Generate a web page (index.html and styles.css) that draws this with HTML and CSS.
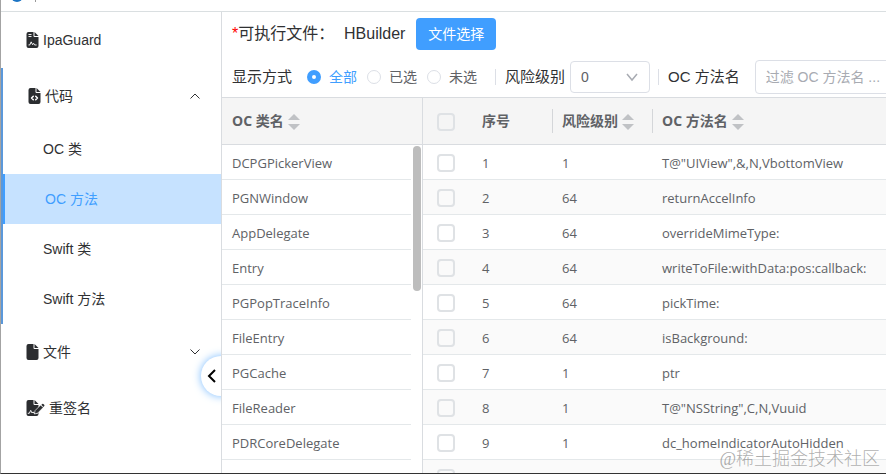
FILE: index.html
```html
<!DOCTYPE html>
<html lang="zh-CN">
<head>
<meta charset="utf-8">
<title>IpaGuard</title>
<link rel="stylesheet" href="styles.css">
</head>
<body>
<div class="window">
  <header class="titlebar"><span class="app-dot"></span><span class="app-tick"></span></header>
  <div class="layout">
    <nav class="sidebar">
      <a class="item" href="#guard">
        <svg class="icon" viewBox="0 0 384 512"><path fill="#2b2d30" d="M64 0h160v128q0 32 32 32h128v288q0 64-64 64H64q-64 0-64-64V64Q0 0 64 0z"/><path fill="#2b2d30" d="M256 0v128h128z"/><path fill="none" stroke="#fff" stroke-width="30" d="M64 80h96M64 145h96M64 415h40l45-100 45 90 35-42 30 52h65"/></svg>
        <span>IpaGuard</span>
      </a>
      <div class="group">
        <a class="item shifted" href="#code">
          <svg class="icon" viewBox="0 0 384 512"><path fill="#2b2d30" d="M64 0h160v128q0 32 32 32h128v288q0 64-64 64H64q-64 0-64-64V64Q0 0 64 0z"/><path fill="#2b2d30" d="M256 0v128h128z"/><path fill="none" stroke="#fff" stroke-width="48" stroke-linecap="round" stroke-linejoin="round" d="M153 265l-56 56 56 56M231 265l56 56-56 56"/></svg>
          <span>代码</span>
          <svg class="arrow" viewBox="0 0 12 12"><path d="M1.500 8.500L6 4l4.500 4.500"/></svg>
        </a>
        <a class="sub" href="#oc-class">OC 类</a>
        <a class="sub active" href="#oc-method">OC 方法</a>
        <a class="sub" href="#swift-class">Swift 类</a>
        <a class="sub" href="#swift-method">Swift 方法</a>
      </div>
      <a class="item" href="#files">
        <svg class="icon" viewBox="0 0 384 512"><path fill="#2b2d30" d="M64 0h160v128q0 32 32 32h128v288q0 64-64 64H64q-64 0-64-64V64Q0 0 64 0z"/><path fill="#2b2d30" d="M256 0v128h128z"/></svg>
        <span>文件</span>
        <svg class="arrow" viewBox="0 0 12 12"><path d="M1.500 3.500L6 8l4.500-4.500"/></svg>
      </a>
      <a class="item" href="#sign">
        <svg class="icon wide" viewBox="0 0 576 512"><path fill="#2b2d30" d="M64 0h160v128q0 32 32 32h128v288q0 64-64 64H64q-64 0-64-64V64Q0 0 64 0z"/><path fill="#2b2d30" d="M256 0v128h128z"/><path fill="none" stroke="#fff" stroke-width="30" d="M40 425h50l45-95 40 85 35-35 25 40h140"/><path fill="#2b2d30" stroke="#fff" stroke-width="22" d="M274 338l178-178 82 82-178 178-104 28z"/><path fill="#2b2d30" d="M476 155l28-26q22-18 44 4l18 18q20 22 2 44l-26 28z"/></svg>
        <span>重签名</span>
      </a>
      <button class="collapse" type="button" aria-label="收起"><svg viewBox="0 0 12 16"><path d="M9 2L3 8l6 6"/></svg></button>
    </nav>
    <main class="main">
      <div class="file-row">
        <span class="file-label"><span class="star">*</span>可执行文件：</span>
        <span class="file-name">HBuilder</span>
        <button class="primary" type="button">文件选择</button>
      </div>
      <form class="filters">
        <span class="caption">显示方式</span>
        <div class="radios">
          <label><input type="radio" name="mode" checked><span>全部</span></label>
          <label><input type="radio" name="mode"><span>已选</span></label>
          <label><input type="radio" name="mode"><span>未选</span></label>
        </div>
        <span class="rule wide-rule"></span>
        <label class="caption" for="risk">风险级别</label>
        <div class="select">
          <select id="risk"><option>0</option><option>1</option><option>64</option></select>
          <svg viewBox="0 0 14 14"><path d="M2 4l5 6 5-6"/></svg>
        </div>
        <span class="rule"></span>
        <label class="caption" for="method">OC 方法名</label>
        <input class="search" id="method" type="text" placeholder="过滤 OC 方法名 ...">
      </form>
      <div class="tables">
        <section class="classes">
          <table>
            <thead><tr><th><span class="head">OC 类名<span class="sort"></span></span></th></tr></thead>
            <tbody>
              <tr><td>DCPGPickerView</td></tr>
              <tr><td>PGNWindow</td></tr>
              <tr><td>AppDelegate</td></tr>
              <tr><td>Entry</td></tr>
              <tr><td>PGPopTraceInfo</td></tr>
              <tr><td>FileEntry</td></tr>
              <tr><td>PGCache</td></tr>
              <tr><td>FileReader</td></tr>
              <tr><td>PDRCoreDelegate</td></tr>
            </tbody>
          </table>
          <span class="thumb"></span>
        </section>
        <section class="methods">
          <table>
            <colgroup><col class="c-check"><col class="c-index"><col class="c-risk"><col></colgroup>
            <thead><tr>
              <th class="check"><input type="checkbox" aria-label="全选"></th>
              <th>序号</th>
              <th class="split"><span class="head">风险级别<span class="sort"></span></span></th>
              <th class="split"><span class="head">OC 方法名<span class="sort"></span></span></th>
            </tr></thead>
            <tbody>
              <tr><td class="check"><input type="checkbox" aria-label="1"></td><td>1</td><td>1</td><td>T@"UIView",&amp;,N,VbottomView</td></tr>
              <tr><td class="check"><input type="checkbox" aria-label="2"></td><td>2</td><td>64</td><td>returnAccelInfo</td></tr>
              <tr><td class="check"><input type="checkbox" aria-label="3"></td><td>3</td><td>64</td><td>overrideMimeType:</td></tr>
              <tr><td class="check"><input type="checkbox" aria-label="4"></td><td>4</td><td>64</td><td>writeToFile:withData:pos:callback:</td></tr>
              <tr><td class="check"><input type="checkbox" aria-label="5"></td><td>5</td><td>64</td><td>pickTime:</td></tr>
              <tr><td class="check"><input type="checkbox" aria-label="6"></td><td>6</td><td>64</td><td>isBackground:</td></tr>
              <tr><td class="check"><input type="checkbox" aria-label="7"></td><td>7</td><td>1</td><td>ptr</td></tr>
              <tr><td class="check"><input type="checkbox" aria-label="8"></td><td>8</td><td>1</td><td>T@"NSString",C,N,Vuuid</td></tr>
              <tr><td class="check"><input type="checkbox" aria-label="9"></td><td>9</td><td>1</td><td>dc_homeIndicatorAutoHidden</td></tr>
              <tr><td class="check"><input type="checkbox" aria-label="10"></td><td></td><td></td><td></td></tr>
            </tbody>
          </table>
        </section>
      </div>
    </main>
  </div>
  <span class="watermark">@稀土掘金技术社区</span>
</div>
</body>
</html>
```
FILE: styles.css
```css
* { box-sizing: border-box; }

body {
  margin: 0;
  background: #fff;
  color: #303133;
  font: 14px/20px "Liberation Sans", "Noto Sans CJK SC", sans-serif;
}

a { color: inherit; text-decoration: none; }
button, input, select { font: inherit; margin: 0; }

.window {
  position: relative;
  display: flex;
  flex-direction: column;
  height: 100vh;
  overflow: hidden;
  border-left: 1px solid #a3a3a3;
  border-bottom: 1px solid #333;
}

.titlebar {
  flex: none;
  display: flex;
  align-items: flex-end;
  gap: 12px;
  height: 12px;
  padding: 0 10px 9px;
  border-bottom: 1px solid #dadfe1;
}

.app-dot {
  width: 12px;
  height: 12px;
  border-radius: 50%;
  background: #1b74c4;
}

.app-tick { width: 1px; height: 12px; background: #999; }

.layout { flex: 1; display: flex; min-height: 0; }

.sidebar {
  position: relative;
  flex: none;
  width: 221px;
  overflow: hidden;
  border-right: 1px solid #d9dce0;
}

.item {
  display: flex;
  align-items: center;
  gap: 4px;
  height: 56px;
  padding: 0 20px 0 25px;
}

.group { border-left: 2px solid #5b98da; }

.icon { flex: none; width: 13px; height: 16px; }
.icon.wide { width: 19px; }

.arrow {
  width: 12px;
  height: 12px;
  margin-left: auto;
  fill: none;
  stroke: #303133;
}

.sub {
  display: flex;
  align-items: center;
  height: 50px;
  padding-left: 40px;
}

.sub.active {
  border-left: 2px solid #409eff;
  background: #c6e2ff;
  color: #409eff;
}

.collapse {
  position: absolute;
  top: 344px;
  right: -20px;
  width: 40px;
  height: 40px;
  padding: 0 0 0 5px;
  border: 0;
  border-radius: 50%;
  background: #fff;
  box-shadow: 0 0 8px #79bbff;
  text-align: left;
}

.collapse svg {
  display: block;
  width: 12px;
  height: 16px;
  fill: none;
  stroke: #000;
  stroke-width: 2;
}

.main { flex: 1; min-width: 0; display: flex; flex-direction: column; }

.file-row {
  flex: none;
  display: flex;
  align-items: center;
  height: 44px;
  padding-left: 10px;
  font-size: 16px;
}

.file-label { width: 112px; white-space: nowrap; }
.star { color: #f00; }

.primary {
  width: 80px;
  height: 32px;
  margin-left: 11px;
  padding: 0;
  border: 0;
  border-radius: 4px;
  background: #409eff;
  color: #fff;
  font-size: 14px;
}

.filters {
  flex: none;
  display: flex;
  align-items: center;
  height: 42px;
  padding-left: 10px;
  border-bottom: 1px solid #d9dce0;
}

.caption { flex: none; font-size: 15px; }

.radios { flex: none; display: flex; gap: 10px; margin-left: 15px; color: #606266; }
.radios label { display: flex; align-items: center; gap: 8px; }

.radios input {
  appearance: none;
  width: 14px;
  height: 14px;
  border: 1px solid #dcdfe6;
  border-radius: 50%;
  background: #fff;
}

.radios input:checked { border: 5px solid #409eff; }
.radios input:checked + span { color: #409eff; }

.rule { flex: none; width: 1px; height: 16px; margin: 0 9px 0 8px; background: #dcdfe6; }
.wide-rule { margin-left: 18px; }

.select { position: relative; flex: none; width: 80px; margin-left: 5px; }

.select select {
  display: block;
  appearance: none;
  width: 100%;
  height: 32px;
  padding: 0 10px;
  border: 1px solid #dcdfe6;
  border-radius: 4px;
  background: #fff;
  color: #606266;
}

.select svg {
  position: absolute;
  top: 9px;
  right: 11px;
  width: 14px;
  height: 14px;
  fill: none;
  stroke: #a8abb2;
  stroke-width: 1.5;
  pointer-events: none;
}

.search {
  flex: 1;
  min-width: 160px;
  height: 34px;
  margin-left: 15px;
  padding: 0 10px;
  border: 1px solid #dcdfe6;
  border-radius: 4px;
  color: #606266;
}

.search::placeholder { color: #a8abb2; }

.tables { flex: 1; display: flex; min-height: 0; }

.classes {
  position: relative;
  flex: none;
  width: 201px;
  overflow: hidden;
  border-right: 1px solid #d9dce0;
  background: linear-gradient(#f5f5f5 46px, #d9dce0 46px, #d9dce0 47px, #fff 47px);
}

.classes tbody { display: block; width: 189px; }
.classes thead, .classes tbody tr { display: table; width: 100%; }

.thumb {
  position: absolute;
  top: 48px;
  right: 1px;
  width: 8px;
  height: 145px;
  border-radius: 4px;
  background: #bdbdbd;
}

.methods { flex: 1; min-width: 0; overflow: hidden; }

table {
  width: 100%;
  border-spacing: 0;
  table-layout: fixed;
  color: #606266;
  font: 13px/20px "Open Sans", "Noto Sans CJK SC", sans-serif;
}

.c-check { width: 49px; }
.c-index { width: 80px; }
.c-risk { width: 100px; }

th {
  height: 47px;
  padding: 0 10px;
  border-bottom: 1px solid #d9dce0;
  background: #f5f5f5;
  font-size: 14px;
  text-align: left;
  white-space: nowrap;
}

td {
  height: 35px;
  padding: 2px 10px 0;
  border-bottom: 1px solid #e4e8ea;
  white-space: nowrap;
}

.methods tbody tr:nth-child(even) { background: #fafafa; }

.split {
  background: linear-gradient(#d4d6d9, #d4d6d9) 0 11px / 1px 24px no-repeat #f5f5f5;
}

.check { padding: 2px 0 0 14px; }

.check input {
  display: block;
  appearance: none;
  width: 18px;
  height: 18px;
  border: 2px solid #dfe2e5;
  border-radius: 4px;
}

.head { display: flex; align-items: center; gap: 4px; }

.sort { display: grid; gap: 4px; padding-top: 2px; }

.sort::before, .sort::after {
  content: "";
  border: 6px solid transparent;
  border-top-width: 0;
  border-bottom: 6px solid #c0c2c5;
}

.sort::after {
  border-top: 6px solid #c0c2c5;
  border-bottom: 0;
}

.watermark {
  position: absolute;
  right: 6px;
  bottom: 2px;
  color: rgba(120, 120, 120, 0.6);
  font: 300 18px/24px "Liberation Serif", "Noto Sans CJK SC", serif;
}
```
